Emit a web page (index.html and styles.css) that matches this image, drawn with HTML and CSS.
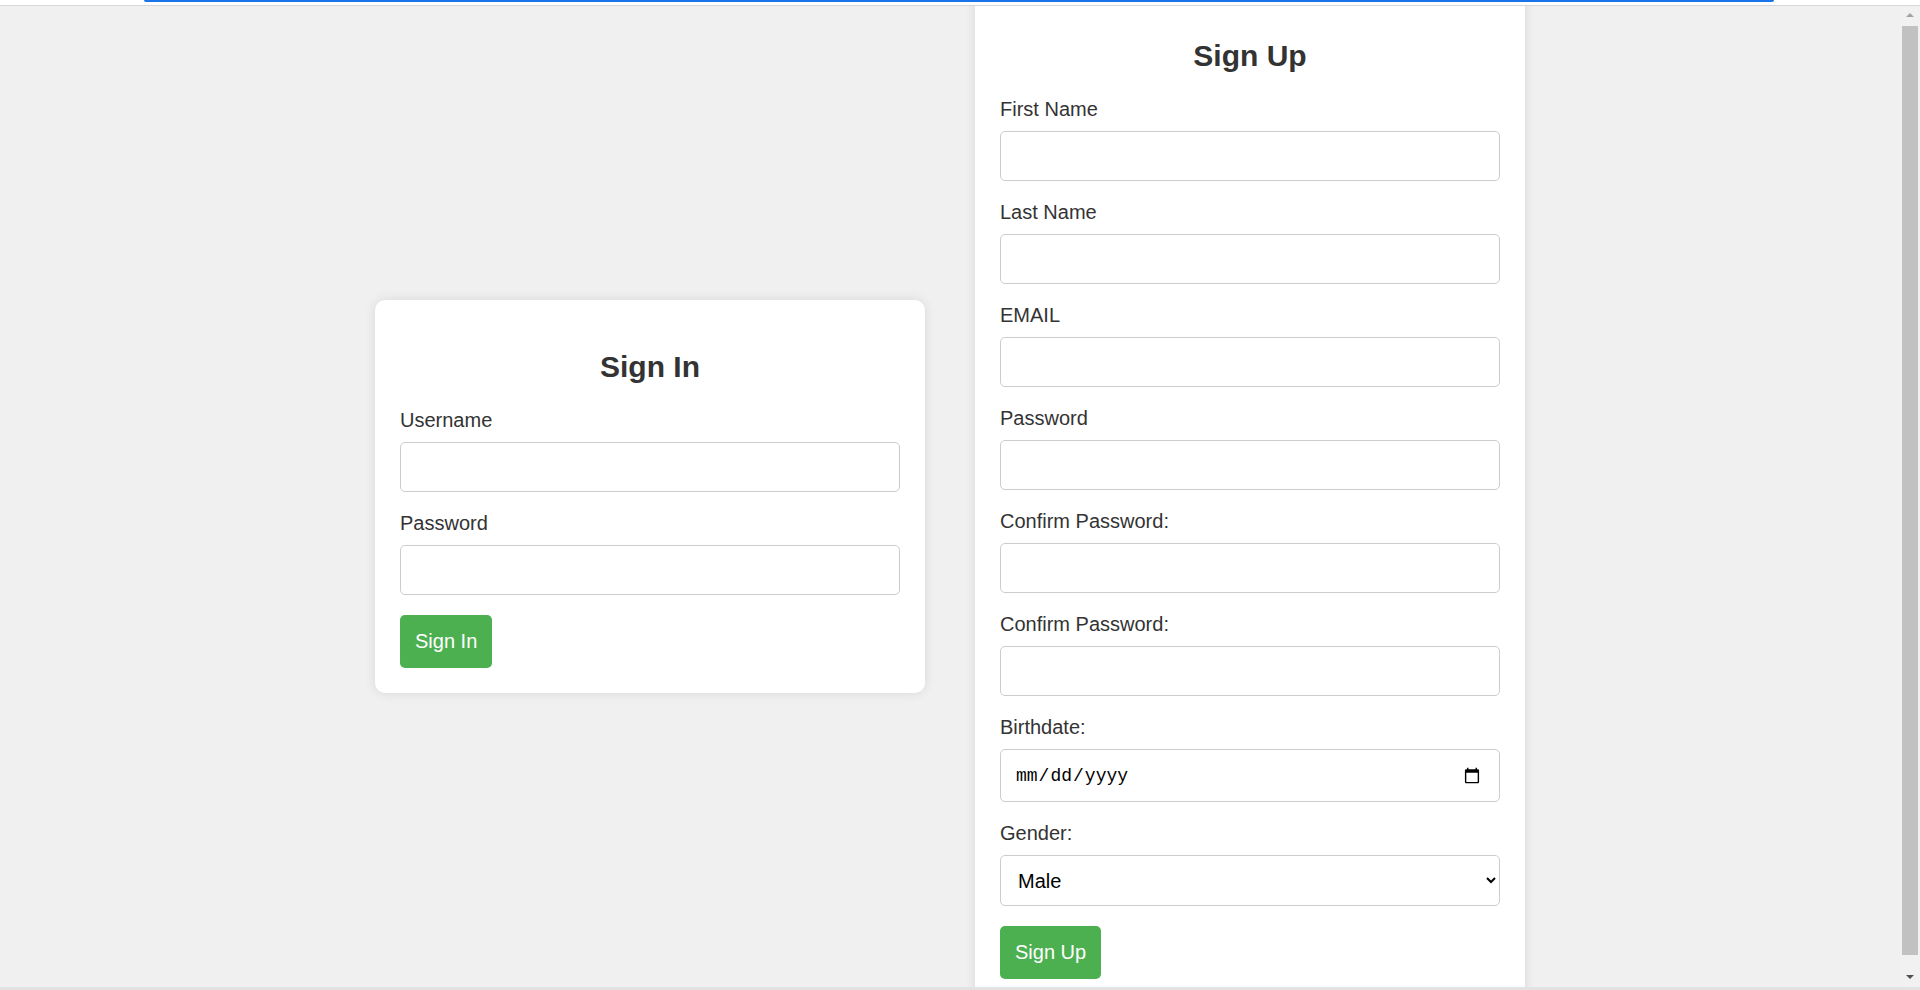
FILE: index.html
```html
<!DOCTYPE html>
<html lang="en">
<head>
<meta charset="utf-8">
<title>Sign In / Sign Up</title>
<link rel="stylesheet" href="styles.css">
</head>
<body>
  <div class="topbar"><div class="loadbar"></div></div>
  <div class="window">
    <main class="viewport">
      <section class="card">
        <h2>Sign In</h2>
        <form>
          <div class="field">
            <label for="username">Username</label>
            <input type="text" id="username" class="text-input">
          </div>
          <div class="field">
            <label for="password">Password</label>
            <input type="password" id="password" class="text-input">
          </div>
          <button type="button" class="btn">Sign In</button>
        </form>
      </section>
      <section class="card">
        <h2>Sign Up</h2>
        <form>
          <div class="field">
            <label for="first">First Name</label>
            <input type="text" id="first" class="text-input">
          </div>
          <div class="field">
            <label for="last">Last Name</label>
            <input type="text" id="last" class="text-input">
          </div>
          <div class="field">
            <label for="email">EMAIL</label>
            <input type="email" id="email" class="text-input">
          </div>
          <div class="field">
            <label for="pw">Password</label>
            <input type="password" id="pw" class="text-input">
          </div>
          <div class="field">
            <label for="pw2">Confirm Password:</label>
            <input type="password" id="pw2" class="text-input">
          </div>
          <div class="field">
            <label for="pw3">Confirm Password:</label>
            <input type="password" id="pw3" class="text-input">
          </div>
          <div class="field">
            <label for="birth">Birthdate:</label>
            <input type="date" id="birth" class="date-input">
          </div>
          <div class="field">
            <label for="gender">Gender:</label>
            <select id="gender" class="select-input">
              <option>Male</option>
              <option>Female</option>
            </select>
          </div>
          <button type="button" class="btn">Sign Up</button>
        </form>
      </section>
    </main>
    <div class="scrollbar">
      <div class="arrow arrow-up"></div>
      <div class="track"><div class="thumb"></div></div>
      <div class="arrow arrow-down"></div>
    </div>
  </div>
  <div class="bottombar"></div>
</body>
</html>
```
FILE: styles.css
```css
html, body {
  margin: 0;
  padding: 0;
}
body {
  width: 1920px;
  height: 990px;
  overflow: hidden;
  background: #ffffff;
  font-family: "Liberation Sans", Arial, sans-serif;
}
.topbar {
  height: 5px;
  background: #ffffff;
  border-bottom: 1px solid #d6d6d6;
}
.loadbar {
  margin-left: 144px;
  width: 1630px;
  height: 2px;
  background: #1a73e8;
  border-radius: 0 0 2px 2px;
}
.window {
  display: flex;
  height: 981px;
}
.viewport {
  flex: 1;
  background: #f0f0f0;
  overflow: hidden;
  display: flex;
  justify-content: center;
  align-items: center;
  gap: 50px;
}
.card {
  flex-shrink: 0;
  width: 500px;
  padding: 25px;
  background: #ffffff;
  border-radius: 10px;
  box-shadow: 0 0 12px rgba(0, 0, 0, 0.1);
}
.card h2 {
  margin: 25px 0;
  font-size: 30px;
  line-height: 34.5px;
  text-align: center;
  color: #333333;
}
.field {
  margin-bottom: 20px;
}
.field label {
  display: block;
  font-size: 20px;
  line-height: 23px;
  margin-bottom: 10px;
  color: #333333;
}
.text-input,
.date-input,
.select-input {
  display: block;
  width: 100%;
  box-sizing: border-box;
  border: 1px solid #cccccc;
  border-radius: 5px;
  background: #ffffff;
  margin: 0;
}
.text-input {
  height: 50px;
  padding: 0 12.5px;
  font-family: "Liberation Sans", Arial, sans-serif;
  font-size: 20px;
}
.date-input {
  height: 52.5px;
  padding: 0 16px 0 14px;
  font-family: "Liberation Mono", "DejaVu Sans Mono", monospace;
  font-size: 18px;
  color: #000000;
}
.select-input {
  height: 51.5px;
  padding: 0 8px 0 13px;
  font-family: "Liberation Sans", Arial, sans-serif;
  font-size: 20px;
  color: #000000;
}
.btn {
  display: block;
  padding: 15px;
  border: none;
  border-radius: 5px;
  background: #4caf50;
  color: #ffffff;
  font-family: "Liberation Sans", Arial, sans-serif;
  font-size: 20px;
  line-height: 23px;
}
.scrollbar {
  width: 20px;
  background: #f1f1f1;
  display: flex;
  flex-direction: column;
  align-items: center;
}
.arrow {
  width: 0;
  height: 0;
  border-left: 4px solid transparent;
  border-right: 4px solid transparent;
}
.arrow-up {
  margin: 7px 0 6px;
  border-bottom: 4px solid #a3a3a3;
}
.arrow-down {
  margin: 6px 0 8px;
  border-top: 4px solid #505050;
}
.track {
  flex: 1;
  width: 100%;
  display: flex;
  flex-direction: column;
  padding: 3px 2px 14px 2px;
  box-sizing: border-box;
}
.thumb {
  flex: 1;
  background: #c1c1c1;
}
.bottombar {
  height: 3px;
  background: #e2e2e2;
}
```
